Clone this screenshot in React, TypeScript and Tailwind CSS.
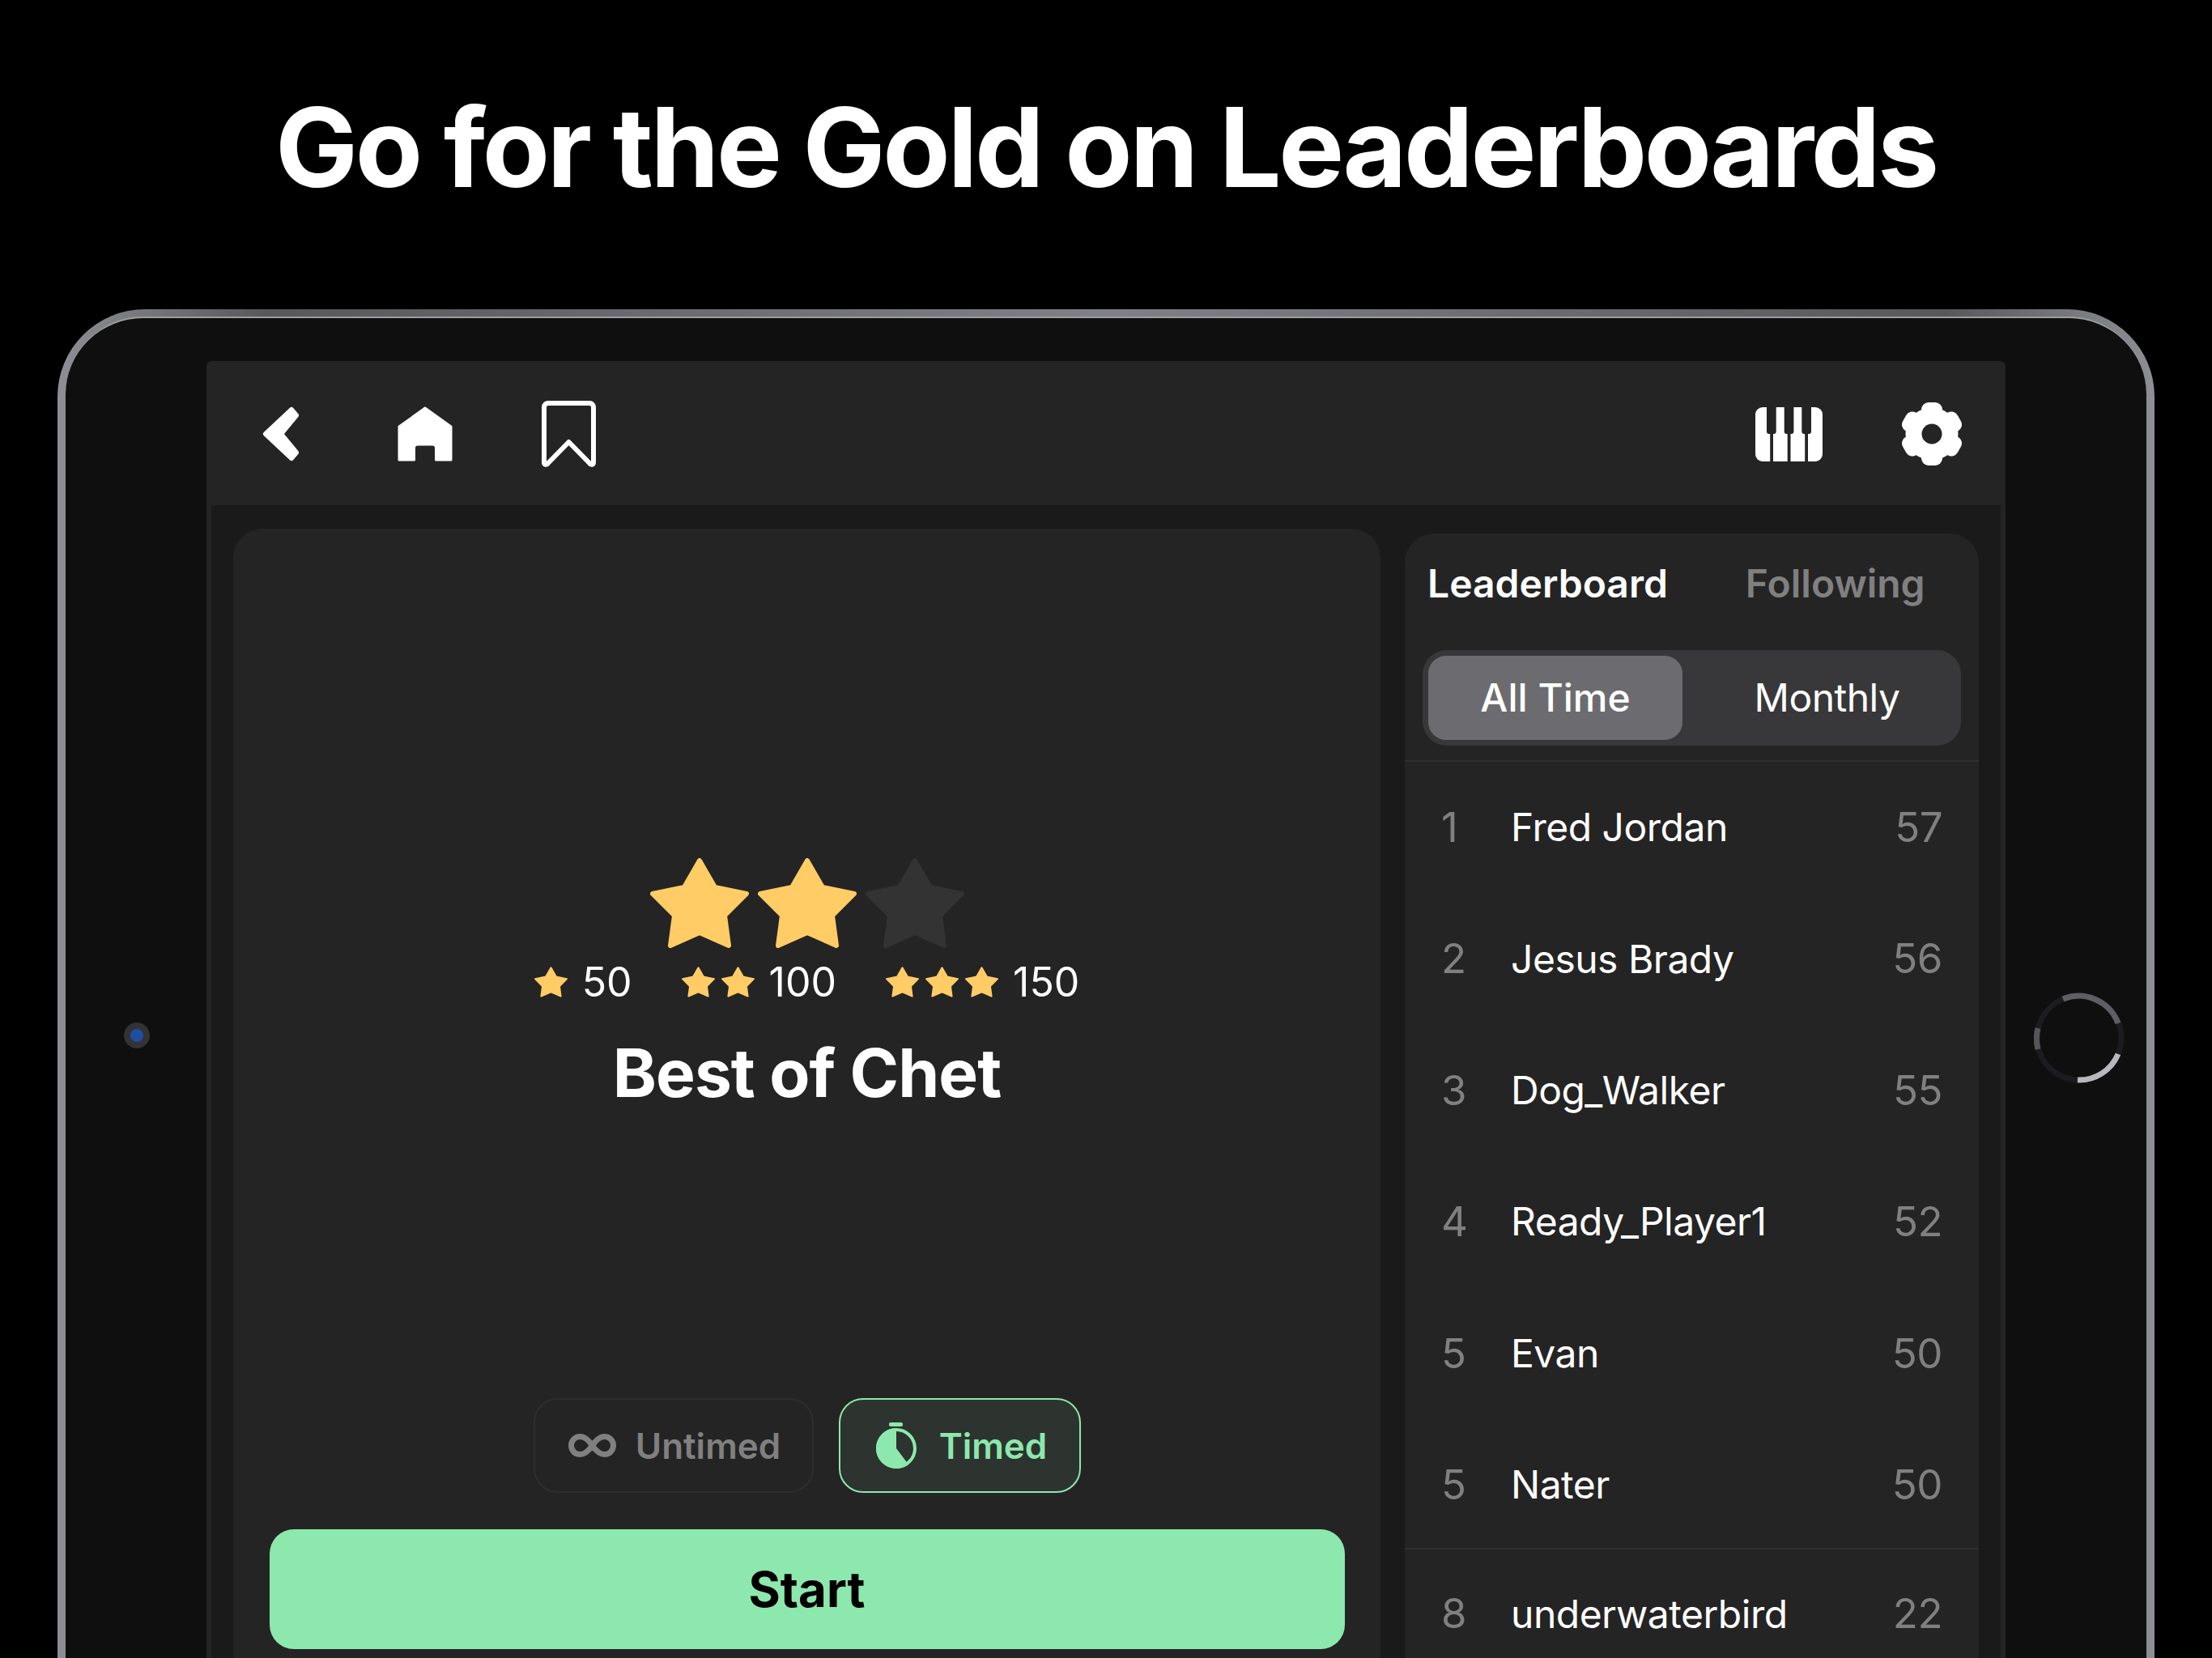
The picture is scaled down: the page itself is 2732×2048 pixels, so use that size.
import type { ReactNode } from "react";

const SCREEN = "#242424";
const FONT = "font-['Inter','Liberation_Sans',sans-serif]";

const ROWS = [
  { rank: 1, name: "Fred Jordan", score: 57 },
  { rank: 2, name: "Jesus Brady", score: 56 },
  { rank: 3, name: "Dog_Walker", score: 55 },
  { rank: 4, name: "Ready_Player1", score: 52 },
  { rank: 5, name: "Evan", score: 50 },
  { rank: 5, name: "Nater", score: 50 },
];

function Star({ className, color = "#ffcc66" }: { className: string; color?: string }) {
  return (
    <svg viewBox="0 0 122 111" className={className}>
      <path
        d="M61 3 L80 36 L119 44 L92 71 L97 108 L61 92 L25 108 L30 71 L3 44 L42 36 Z"
        fill={color}
        stroke={color}
        strokeWidth="6"
        strokeLinejoin="round"
      />
    </svg>
  );
}

function BackIcon() {
  return (
    <svg viewBox="0 0 46 68" className="h-[68px] w-[46px]">
      <path
        d="M36 4 L42 11 L23 34 L42 57 L36 64 L4 34 Z"
        fill="#fff"
        stroke="#fff"
        strokeWidth="6"
        strokeLinejoin="round"
      />
    </svg>
  );
}

function HomeIcon() {
  return (
    <svg viewBox="0 0 68 68" className="h-[68px] w-[68px]">
      <path
        d="M34 2 L66 25 V66 H47.5 V51 Q47.5 47 43 47 H25 Q20.5 47 20.5 51 V66 H2 V25 Z"
        fill="#fff"
        stroke="#fff"
        strokeWidth="3"
        strokeLinejoin="round"
      />
    </svg>
  );
}

function BookmarkIcon() {
  return (
    <svg viewBox="0 0 67 82" className="h-[82px] w-[67px]" fill="none" stroke="#fff" strokeWidth="6" strokeLinejoin="round">
      <path d="M3 8 a5 5 0 0 1 5-5 h51 a5 5 0 0 1 5 5 v68 c0 3-3 4-5 1 L33.5 51 L8 77 c-2 3-5 2-5-1 Z" />
    </svg>
  );
}

function PianoIcon() {
  const slots = [
    { x: 14, stem: 18.2 },
    { x: 35.7, stem: 39.7 },
    { x: 57.3, stem: 61.2 },
  ];
  return (
    <svg viewBox="0 0 83 67" className="h-[67px] w-[83px]">
      <rect width="83" height="67" rx="9" fill="#fff" />
      {slots.map((s) => (
        <g key={s.x} fill={SCREEN}>
          <rect x={s.x} y="-4" width="11.7" height="37" rx="3" />
          <rect x={s.stem} y="0" width="3.8" height="67" />
        </g>
      ))}
    </svg>
  );
}

function GearIcon() {
  return (
    <svg viewBox="0 0 74 78" className="h-[78px] w-[74px]">
      <g fill="#fff">
        <circle cx="37" cy="39" r="32.5" />
        {[0, 60, 120, 180, 240, 300].map((a) => (
          <rect key={a} x="24" y="0" width="26" height="24" rx="9" transform={`rotate(${a} 37 39)`} />
        ))}
      </g>
      <circle cx="37" cy="39" r="12.5" fill={SCREEN} />
    </svg>
  );
}

function InfinityIcon() {
  return (
    <svg viewBox="0 0 59 29" className="h-[29px] w-[59px]" fill="none" stroke="#808080" strokeWidth="7">
      <path d="M29.5 14.5 C25 8 20.5 3.5 14.5 3.5 C8 3.5 3.5 8.5 3.5 14.5 C3.5 20.5 8 25.5 14.5 25.5 C20.5 25.5 25 21 29.5 14.5 C34 8 38.5 3.5 44.5 3.5 C51 3.5 55.5 8.5 55.5 14.5 C55.5 20.5 51 25.5 44.5 25.5 C38.5 25.5 34 21 29.5 14.5 Z" />
    </svg>
  );
}

function TimerIcon() {
  return (
    <svg viewBox="0 0 50 57" className="h-[57px] w-[50px]">
      <rect x="16" y="0" width="17" height="5" rx="2" fill="#8ce8ac" />
      <circle cx="25" cy="32" r="23" fill="none" stroke="#8ce8ac" strokeWidth="4" />
      <path d="M25 32 L25 7 A25 25 0 1 0 40 52 Z" fill="#8ce8ac" />
    </svg>
  );
}

function Row({ rank, name, score, ruled }: { rank: number; name: string; score: number; ruled?: boolean }) {
  return (
    <div className={`flex h-[162.4px] items-center pr-[45px] pl-[45px] text-[48px] tracking-[-0.5px] ${ruled ? "-mt-[3px] border-t-2 border-[#2e2e2e] pb-[2px]" : ""}`}>
      <span className="w-[86px] text-[51px] text-[#808080]">{rank}</span>
      <span className="flex-1 text-white">{name}</span>
      <span className="text-[51px] text-[#808080]">{score}</span>
    </div>
  );
}

function ModeButton({ active, icon, label }: { active?: boolean; icon: ReactNode; label: string }) {
  return (
    <div
      className={`flex h-[117px] items-center justify-center rounded-[30px] border-2 text-[44px] font-semibold ${
        active ? "w-[299px] gap-[28px] border-[#8ce8ac] bg-[#2d332f] pl-[5px] text-[#8ce8ac]" : "w-[346px] gap-[24px] border-[#2e2e2e] pl-[3px] text-[#808080]"
      }`}
    >
      {icon}
      {label}
    </div>
  );
}

function StageCard() {
  return (
    <div className="flex w-[1417px] shrink-0 flex-col items-center rounded-t-[36px] bg-[#242424] pt-[407px]">
      <div className="flex gap-[11px]">
        <Star className="h-[111px] w-[122px]" />
        <Star className="h-[111px] w-[122px]" />
        <Star className="h-[111px] w-[122px]" color="#333333" />
      </div>
      <div className="mt-[21px] flex h-[42px] items-center gap-[61px] text-[50px] leading-none text-white">
        <div className="flex items-center gap-[18px]">
          <Star className="h-[38px] w-[41px]" />
          50
        </div>
        <div className="flex items-center">
          <div className="mr-[18px] flex gap-[8px]">
            <Star className="h-[38px] w-[41px]" />
            <Star className="h-[38px] w-[41px]" />
          </div>
          100
        </div>
        <div className="flex items-center">
          <div className="mr-[18px] flex gap-[8px]">
            <Star className="h-[38px] w-[41px]" />
            <Star className="h-[38px] w-[41px]" />
            <Star className="h-[38px] w-[41px]" />
          </div>
          150
        </div>
      </div>
      <h2 className="mt-[42px] text-[82px] leading-[100px] font-bold tracking-[-1px] text-white">Best of Chet</h2>
      <div className="mt-[351px] flex gap-[31px]">
        <ModeButton icon={<InfinityIcon />} label="Untimed" />
        <ModeButton active icon={<TimerIcon />} label="Timed" />
      </div>
      <div className="mt-[45px] flex h-[148px] w-[1328px] shrink-0 items-center justify-center rounded-[30px] bg-[#8ce8ac] text-[60px] font-bold text-black">
        Start
      </div>
    </div>
  );
}

function LeaderboardCard() {
  return (
    <div className="mt-[6px] w-[709px] shrink-0 rounded-t-[36px] bg-[#242424]">
      <div className="flex h-[124px] items-center pl-[28px] text-[48px] font-semibold">
        <span className="text-white">Leaderboard</span>
        <span className="ml-[96px] text-[#808080]">Following</span>
      </div>
      <div className="mx-[22px] mt-[20px] flex h-[118px] rounded-[30px] bg-[#38383a] p-[7px] text-[48px] font-medium text-white">
        <div className="flex w-[314px] items-center justify-center rounded-[22px] bg-[#6c6c70]">All Time</div>
        <div className="flex flex-1 items-center justify-center pl-[20px] font-normal tracking-[-0.5px]">Monthly</div>
      </div>
      <div className="mt-[18px] border-t-2 border-[#2e2e2e]">
        {ROWS.map((r, i) => (
          <Row key={i} {...r} />
        ))}
        <Row ruled rank={8} name="underwaterbird" score={22} />
      </div>
    </div>
  );
}

export default function App() {
  return (
    <div className={`h-[2048px] w-[2732px] overflow-hidden bg-black ${FONT}`}>
      <h1 className="flex h-[382px] items-center justify-center pb-[18px] text-[136px] font-bold tracking-[-3.3px] text-white">
        Go for the Gold on Leaderboards
      </h1>
      <div className="mx-[71px] h-[1666px] rounded-t-[108px] bg-[linear-gradient(90deg,#8e8f94_0%,#77787c_4%,#58585b_10%,#808185_50%,#58585b_90%,#77787c_96%,#8e8f94_100%)] px-[10px] pt-[9px]">
        <div className="flex h-full rounded-t-[96px] border-t-2 border-[#9c9da0] bg-[#0f0f0f]">
          <div className="flex w-[174px] shrink-0 justify-center pt-[870px] pl-[1px]">
            <div className="flex h-[32px] w-[32px] items-center justify-center rounded-full bg-[#333336]">
              <div className="h-[16px] w-[16px] rounded-full bg-[#1d4f9e]" />
            </div>
          </div>
          <div className="flex w-[2222px] shrink-0 flex-col self-stretch pt-[53px]">
            <div className="flex h-[178px] shrink-0 items-center justify-between rounded-t-[6px] bg-[#242424] pt-[2px] pr-[54px] pl-[69px]">
              <div className="flex items-center">
                <BackIcon />
                <div className="ml-[121px]">
                  <HomeIcon />
                </div>
                <div className="ml-[110px]">
                  <BookmarkIcon />
                </div>
              </div>
              <div className="flex items-center gap-[98px]">
                <PianoIcon />
                <GearIcon />
              </div>
            </div>
            <div className="min-h-0 flex-1 bg-[#242424] px-[6px]">
              <div className="flex h-full gap-[30px] bg-[#1a1a1a] pt-[29px] pl-[27px]">
                <StageCard />
                <LeaderboardCard />
              </div>
            </div>
          </div>
          <div className="flex flex-1 justify-center pt-[833px]">
            <svg viewBox="0 0 112 112" className="ml-[8px] h-[112px] w-[112px]" fill="none" strokeWidth="7">
              <circle cx="56" cy="56" r="52" stroke="#1c1c20" />
              <path d="M36 8 A52 52 0 0 1 104 38" stroke="#5e5e64" />
              <path d="M5 44 A52 52 0 0 0 5 70" stroke="#55555a" />
              <path d="M104 76 A52 52 0 0 1 54 108" stroke="#b8b8bc" />
            </svg>
          </div>
        </div>
      </div>
    </div>
  );
}
